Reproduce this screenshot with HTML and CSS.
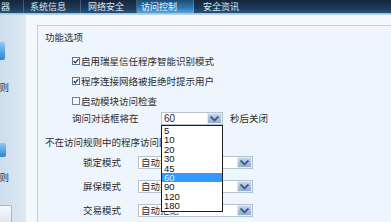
FILE: index.html
```html
<!DOCTYPE html>
<html lang="zh-CN">
<head>
<meta charset="utf-8">
<title>访问控制</title>
<link rel="stylesheet" href="styles.css">
</head>
<body>
<div class="app">
  <nav class="topbar">
    <div class="tab t0">器</div>
    <div class="tab t1">系统信息</div>
    <div class="tab t2">网络安全</div>
    <div class="tab t3 active">访问控制</div>
    <div class="tab t4">安全资讯</div>
  </nav>
  <div class="topline"></div>
  <div class="content">
    <aside class="side">
      <div class="side-icon i1"></div>
      <div class="side-label l1">规则</div>
      <div class="side-icon i2"></div>
      <div class="side-label l2">规则</div>
      <div class="side-btn"></div>
    </aside>
    <main class="main">
      <section class="group">
        <div class="group-title">功能选项</div>
        <div class="check-row first">
          <svg class="cb" viewBox="0 0 8 8" width="8" height="8"><rect x="0.5" y="0.5" width="7" height="7" fill="#fff" stroke="#5b7592"/><path d="M1.7 4 L3.3 5.8 L6.4 2.1" fill="none" stroke="#1d3860" stroke-width="1.3"/></svg>
          <span>启用瑞星信任程序智能识别模式</span>
        </div>
        <div class="check-row">
          <svg class="cb" viewBox="0 0 8 8" width="8" height="8"><rect x="0.5" y="0.5" width="7" height="7" fill="#fff" stroke="#5b7592"/><path d="M1.7 4 L3.3 5.8 L6.4 2.1" fill="none" stroke="#1d3860" stroke-width="1.3"/></svg>
          <span>程序连接网络被拒绝时提示用户</span>
        </div>
        <div class="check-row">
          <svg class="cb" viewBox="0 0 8 8" width="8" height="8"><rect x="0.5" y="0.5" width="7" height="7" fill="#f6f7f9" stroke="#6f8297"/></svg>
          <span>启动模块访问检查</span>
        </div>
        <div class="ask-row">
          <span class="ask-label">询问对话框将在</span>
          <div class="select s-small">
            <span class="val num">60</span>
            <span class="arrow"><svg viewBox="0 0 13 9" width="13" height="9"><path d="M2.5 2.5 L6.5 6.5 L10.5 2.5" fill="none" stroke="#3d5e8d" stroke-width="1.8"/></svg></span>
          </div>
          <span class="after">秒后关闭</span>
          <ul class="dropdown">
            <li>5</li>
            <li>10</li>
            <li>20</li>
            <li>30</li>
            <li>45</li>
            <li class="sel">60</li>
            <li>90</li>
            <li>120</li>
            <li>180</li>
          </ul>
        </div>
        <div class="sub-title">不在访问规则中的程序访问网络时</div>
        <div class="mode-row first">
          <span class="mode-label">锁定模式</span>
          <div class="select s-wide">
            <span class="val">自动拒绝</span>
            <span class="arrow"><svg viewBox="0 0 13 9" width="13" height="9"><path d="M2.5 2.5 L6.5 6.5 L10.5 2.5" fill="none" stroke="#3d5e8d" stroke-width="1.8"/></svg></span>
          </div>
        </div>
        <div class="mode-row">
          <span class="mode-label">屏保模式</span>
          <div class="select s-wide">
            <span class="val">自动拒绝</span>
            <span class="arrow"><svg viewBox="0 0 13 9" width="13" height="9"><path d="M2.5 2.5 L6.5 6.5 L10.5 2.5" fill="none" stroke="#3d5e8d" stroke-width="1.8"/></svg></span>
          </div>
        </div>
        <div class="mode-row">
          <span class="mode-label">交易模式</span>
          <div class="select s-wide">
            <span class="val">自动拒绝</span>
            <span class="arrow"><svg viewBox="0 0 13 9" width="13" height="9"><path d="M2.5 2.5 L6.5 6.5 L10.5 2.5" fill="none" stroke="#3d5e8d" stroke-width="1.8"/></svg></span>
          </div>
        </div>
      </section>
    </main>
  </div>
</div>
</body>
</html>
```
FILE: styles.css
```css
html, body {
  margin: 0;
  padding: 0;
}
body {
  width: 391px;
  height: 222px;
  overflow: hidden;
  font-family: "Noto Sans CJK SC", "Noto Sans", sans-serif;
  font-size: 9.5px;
  color: #2b2b2b;
  background: #f3f8fc;
}
.app {
  width: 391px;
  height: 222px;
  display: flex;
  flex-direction: column;
}
.topbar {
  display: flex;
  height: 13px;
  flex: none;
  background: linear-gradient(#15263d 0%, #1b3654 55%, #24527a 100%);
  color: #d9e8f4;
  font-size: 9px;
  line-height: 13px;
}
.tab {
  height: 13px;
  box-sizing: border-box;
  white-space: nowrap;
  overflow: hidden;
  border-right: 1px solid rgba(140, 180, 215, 0.35);
}
.t0 { width: 24px; padding-left: 1px; }
.t1 { width: 57px; padding-left: 6px; }
.t2 { width: 56px; padding-left: 7px; }
.t3 { width: 57px; padding-left: 4px; }
.t4 { width: 60px; padding-left: 9px; border-right: none; }
.tab.active {
  background: linear-gradient(#1f4d78 0%, #2f78b3 60%, #5aa6db 100%);
  color: #eef6fc;
}
.topline {
  height: 2px;
  flex: none;
  background: linear-gradient(#8fbddb, #c9dcea);
}
.content {
  flex: 1;
  display: flex;
  min-height: 0;
}
.side {
  width: 26px;
  flex: none;
  border-right: 1px solid #f7fafd;
  background: linear-gradient(to right, #cddded, #dde9f4);
  display: flex;
  flex-direction: column;
  overflow: hidden;
}
.side-icon {
  background: linear-gradient(#8cc9f2, #2d84d0);
  border-radius: 0 2px 2px 0;
}
.i1 { margin-top: 27px; width: 5px; height: 18px; }
.i2 { margin-top: 49px; width: 6px; height: 14px; }
.side-label {
  line-height: 14px;
  height: 14px;
  white-space: nowrap;
  margin-left: -10px;
  color: #333;
}
.l1 { margin-top: 20px; }
.l2 { margin-top: 13px; }
.side-btn {
  margin-top: auto;
  width: 12px;
  height: 17px;
  box-sizing: border-box;
  border: 1px solid #a8b6c3;
  border-left: none;
  border-bottom: none;
  border-radius: 0 2px 0 0;
  background: linear-gradient(#f7f9fb, #dfe6ed);
}
.main {
  flex: 1;
  padding: 10px 0 0 10px;
  background: #f4f8fc;
  overflow: hidden;
}
.group {
  border: 1px solid #c3ced8;
  border-right: none;
  border-bottom: none;
  padding: 5px 0 0 7px;
  background: #eff5fc;
  height: 300px;
  margin-right: -5px;
}
.group-title {
  line-height: 12px;
  height: 12px;
}
.check-row {
  display: flex;
  align-items: center;
  height: 20px;
  margin-left: 27px;
  white-space: nowrap;
}
.check-row.first { margin-top: 8px; }
.cb {
  flex: none;
  margin-right: 1px;
}
.ask-row {
  position: relative;
  display: flex;
  align-items: center;
  height: 14px;
  margin-left: 27px;
  white-space: nowrap;
}
.ask-label { width: 89px; flex: none; }
.select {
  height: 13px;
  box-sizing: border-box;
  border: 1px solid #b5c2cf;
  background: #fff;
  display: flex;
  align-items: stretch;
  justify-content: space-between;
  flex: none;
}
.select .val {
  padding-left: 2px;
  line-height: 11px;
  overflow: hidden;
  white-space: nowrap;
}
.select .val.num {
  font-family: "Liberation Sans", sans-serif;
  font-size: 10px;
}
.s-small { width: 62px; }
.s-wide { width: 115px; }
.arrow {
  width: 15px;
  box-sizing: border-box;
  border: 1px solid #e4ebf4;
  background: linear-gradient(#c6d5e8, #93acd0);
  display: flex;
  align-items: center;
  justify-content: center;
}
.after { margin-left: 7px; }
.dropdown {
  position: absolute;
  left: 89px;
  top: 14px;
  width: 62px;
  box-sizing: border-box;
  margin: 0;
  padding: 0;
  list-style: none;
  border: 1px solid #1c1c1c;
  background: #fff;
  font-family: "Liberation Sans", sans-serif;
  font-size: 9.5px;
  color: #111;
}
.dropdown li {
  height: 9.4px;
  line-height: 9.4px;
  padding-left: 2px;
}
.dropdown li.sel {
  background: #3399ff;
  color: #e8f3ff;
}
.sub-title {
  margin-top: 11px;
  line-height: 12px;
  height: 12px;
  white-space: nowrap;
}
.mode-row {
  display: flex;
  align-items: center;
  height: 14px;
  margin-left: 38px;
  margin-top: 10px;
}
.mode-row.first { margin-top: 7px; }
.mode-label { width: 55px; flex: none; }
```
